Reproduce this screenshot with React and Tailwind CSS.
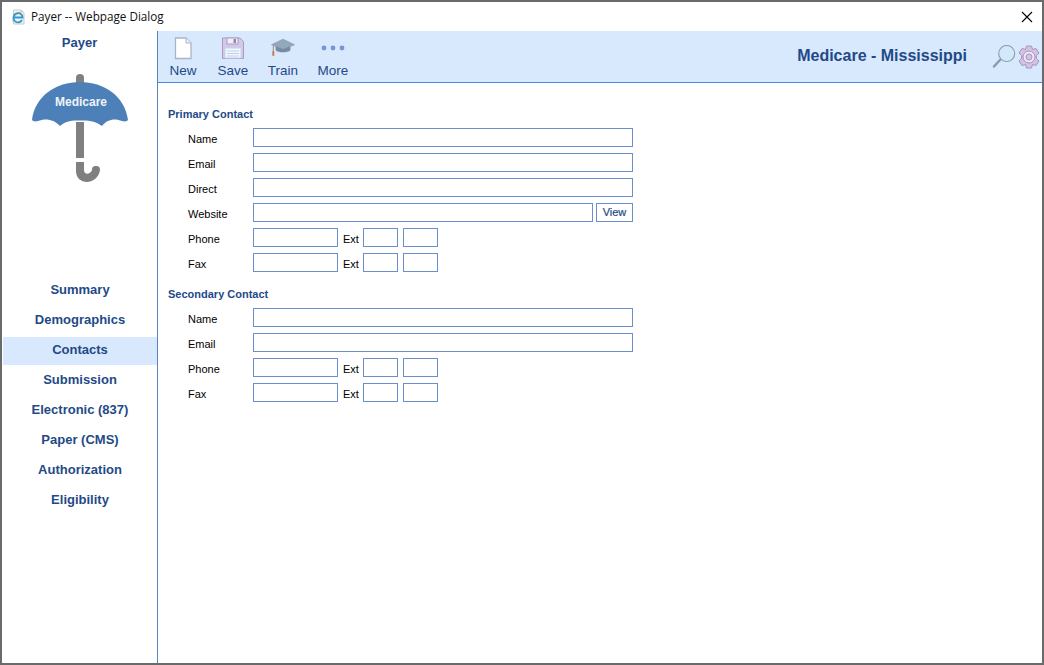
import React from 'react';

const navy = 'text-[#1f4a87]';

const Field = ({ className = '' }) => (
  <div className={`h-[19px] border border-[#6b8fce] bg-white ${className}`} />
);

const Row = ({ label, children }) => (
  <div className="flex h-[25px] items-center">
    <div className="w-[65px] pt-[4px] text-[11px] text-black">{label}</div>
    {children}
  </div>
);

const PhoneRow = ({ label }) => (
  <Row label={label}>
    <Field className="w-[85px]" />
    <span className="ml-[5px] w-[20px] pt-[4px] text-[11px] text-black">Ext</span>
    <Field className="w-[35px]" />
    <Field className="ml-[5px] w-[35px]" />
  </Row>
);

const Umbrella = () => (
  <svg width="96" height="110" viewBox="0 0 96 110" className="block">
    <rect x="44" y="0" width="8" height="14" rx="4" fill="#808080" />
    <path d="M0 46 C3 22 24 8 48 8 C72 8 93 22 96 46 C94 48 92 47.5 90 47 C83 44 75 45 70 52 C64 47 56 46 48 46.5 C40 46 33 47 28 52 C22 45 13 44 6 47 C4 47.5 2 48 0 46 Z" fill="#4d80b8" />
    <rect x="44" y="48" width="8" height="36" fill="#808080" />
    <path d="M44 88 H52 V96 C52 101 58 101 60 96 C60 93 61 92 64 92 C67 92 68 93 68 96 C67 104 60 108 55 108 C49 108 44 104 44 97 Z" fill="#808080" />
    <text x="49" y="32" textAnchor="middle" fontSize="12" fontWeight="700" fill="#eef4fb" fontFamily="Liberation Sans, Arial, sans-serif">Medicare</text>
  </svg>
);

const NewIcon = () => (
  <svg width="20" height="24" viewBox="0 0 20 24">
    <path d="M2.5 2 H13 L18 7 V22.5 H2.5 Z" fill="#fff" stroke="#a9b5c6" strokeWidth="1.3" />
    <path d="M13 2 V7 H18" fill="#eef1f5" stroke="#a9b5c6" />
  </svg>
);

const SaveIcon = () => (
  <svg width="24" height="24" viewBox="0 0 24 24">
    <path d="M1.5 2 H19 L22.5 5.5 V22.5 H1.5 Z" fill="#d4c8e6" stroke="#a99bc9" />
    <rect x="6" y="2" width="11" height="6" fill="#eef0f6" stroke="#a99bc9" />
    <rect x="12.5" y="3" width="2.5" height="4" fill="#8f86ad" />
    <rect x="4" y="12" width="16" height="10" fill="#f4f8fd" stroke="#c4d2ea" />
    <path d="M6 15 H18 M6 17.5 H18 M6 20 H18" stroke="#b9d0ee" />
  </svg>
);

const TrainIcon = () => (
  <svg width="24" height="19" viewBox="0 0 26 20">
    <path d="M5 8 V13 C8 16 18 16 21 13 V8 Z" fill="#768b9f" />
    <path d="M0.5 7 L13 1 L25.5 7 L13 12 Z" fill="#93a8ba" stroke="#7c90a3" strokeWidth="0.6" />
    <rect x="2" y="8" width="1" height="8" fill="#a1866f" />
    <rect x="1.5" y="14" width="2" height="5" fill="#c2764a" />
  </svg>
);

const MoreIcon = () => (
  <svg width="26" height="8" viewBox="0 0 26 8">
    <circle cx="4" cy="4" r="2.4" fill="#7396d6" />
    <circle cx="13" cy="4" r="2.4" fill="#7396d6" />
    <circle cx="22" cy="4" r="2.4" fill="#7396d6" />
  </svg>
);

const SearchIcon = () => (
  <svg width="24" height="24" viewBox="0 0 24 24">
    <path d="M8 15 L2 21.5" stroke="#8a9aa8" strokeWidth="2.5" strokeLinecap="round" />
    <circle cx="14.7" cy="8.5" r="8" fill="#d3e9fb" stroke="#8fa3ae" strokeWidth="1.2" />
  </svg>
);

const GearIcon = () => (
  <svg width="22" height="24" viewBox="0 0 22 24">
    <path d="M8.5 1 H13.5 L14.5 4.5 L18 3.5 L21 8 L18.5 10.5 V13.5 L21 16 L18 20.5 L14.5 19.5 L13.5 23 H8.5 L7.5 19.5 L4 20.5 L1 16 L3.5 13.5 V10.5 L1 8 L4 3.5 L7.5 4.5 Z" fill="#d3c2e2" stroke="#a892c4" />
    <circle cx="11" cy="12" r="6" fill="#efe6f5" stroke="#a892c4" />
    <circle cx="11" cy="12" r="3" fill="#d3c2e2" stroke="#a892c4" />
  </svg>
);

const IeIcon = () => (
  <svg width="16" height="16" viewBox="0 0 16 16">
    <path d="M3.5 1 H11 L14 4 V15 H3.5 Z" fill="#f4f4f4" stroke="#c9c9c9" />
    <path d="M3 12.5 C2 9 8 3 12.5 2.5" fill="none" stroke="#e8b23c" strokeWidth="1" />
    <path d="M12 11 A4.6 4.6 0 1 1 12.6 8.5 H3.8" fill="none" stroke="#2c9ad8" strokeWidth="1.8" />
  </svg>
);

const ToolButton = ({ icon, label }) => (
  <div className="flex w-[50px] flex-col items-center">
    <div className="flex h-[25px] items-center justify-center">{icon}</div>
    <div className={`mt-[3px] text-[13.5px] leading-[16px] ${navy}`}>{label}</div>
  </div>
);

const navItems = ['Summary', 'Demographics', 'Contacts', 'Submission', 'Electronic (837)', 'Paper (CMS)', 'Authorization', 'Eligibility'];

export default function App() {
  return (
    <div className="flex h-[665px] w-[1044px] flex-col overflow-hidden border-2 border-[#6a6a6a] bg-white font-['Liberation_Sans',Arial,sans-serif]">
      {/* title bar */}
      <div className="flex h-[29px] shrink-0 items-center bg-white pl-[8px] pr-[9px]">
        <IeIcon />
        <span className="ml-[5px] font-['Open_Sans','Noto_Sans',sans-serif] text-[11.7px] text-[#111]">Payer -- Webpage Dialog</span>
        <svg width="12" height="12" viewBox="0 0 12 12" className="ml-auto">
          <path d="M1 1 L11 11 M11 1 L1 11" stroke="#000" strokeWidth="1.1" />
        </svg>
      </div>

      <div className="flex min-h-0 flex-1">
        {/* sidebar */}
        <div className="flex w-[156px] shrink-0 flex-col border-r border-[#5b84bd]">
          <div className={`mt-[4px] text-center text-[13px] leading-[16px] font-bold ${navy}`}>Payer</div>
          <div className="mt-[23px] flex justify-center pl-[1px]">
            <Umbrella />
          </div>
          <div className="mt-[93px] ml-[1px] flex flex-col">
            {navItems.map((item) => (
              <div
                key={item}
                className={`mb-[2px] flex h-[28px] items-center justify-center pb-[2px] text-[13px] font-bold ${navy} ${item === 'Contacts' ? 'bg-[#d8e8fd]' : ''}`}
              >
                {item}
              </div>
            ))}
          </div>
        </div>

        <div className="flex min-w-0 flex-1 flex-col">
          {/* toolbar */}
          <div className="flex h-[52px] shrink-0 items-center border-b border-[#4a8ad4] bg-[#d8e8fd] pr-[2px]">
            <div className="flex pt-[1px]">
              <ToolButton icon={<NewIcon />} label="New" />
              <ToolButton icon={<SaveIcon />} label="Save" />
              <ToolButton icon={<TrainIcon />} label="Train" />
              <ToolButton icon={<MoreIcon />} label="More" />
            </div>
            <div className={`mb-[2px] ml-auto text-[16px] font-bold ${navy}`}>Medicare - Mississippi</div>
            <div className="ml-[25px] flex items-center gap-[2px]">
              <SearchIcon />
              <GearIcon />
            </div>
          </div>

          {/* form */}
          <div className="pl-[10px] pt-[24px]">
            <div className={`mb-[4px] text-[11px] leading-[14px] font-bold ${navy}`}>Primary Contact</div>
            <div className="pl-[20px]">
              <Row label="Name"><Field className="w-[380px]" /></Row>
              <Row label="Email"><Field className="w-[380px]" /></Row>
              <Row label="Direct"><Field className="w-[380px]" /></Row>
              <Row label="Website">
                <Field className="w-[340px]" />
                <div className={`ml-[3px] flex h-[19px] w-[37px] items-center justify-center border border-[#6b8fce] text-[11px] [-webkit-text-stroke:0.2px] ${navy}`}>View</div>
              </Row>
              <PhoneRow label="Phone" />
              <PhoneRow label="Fax" />
            </div>
            <div className={`mt-[12px] mb-[4px] text-[11px] leading-[14px] font-bold ${navy}`}>Secondary Contact</div>
            <div className="pl-[20px]">
              <Row label="Name"><Field className="w-[380px]" /></Row>
              <Row label="Email"><Field className="w-[380px]" /></Row>
              <PhoneRow label="Phone" />
              <PhoneRow label="Fax" />
            </div>
          </div>
        </div>
      </div>
    </div>
  );
}
